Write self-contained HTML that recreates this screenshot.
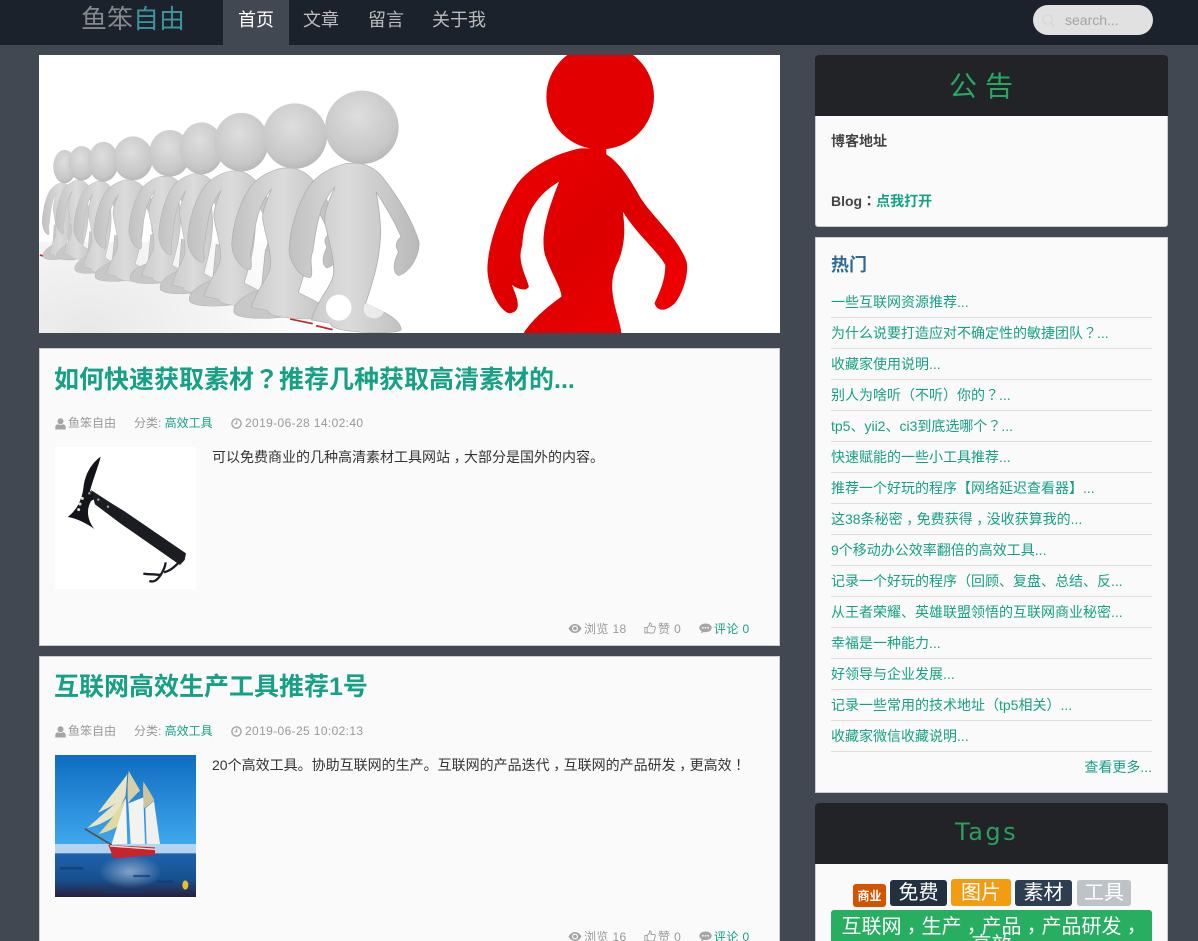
<!DOCTYPE html>
<html lang="zh-Hans">
<head>
<meta charset="utf-8">
<title>鱼笨自由</title>
<style>
html,body{margin:0;padding:0;width:1198px;height:941px;overflow:hidden;background:#414852}
#w{position:relative;width:1198px;height:941px;overflow:hidden;background:#414852;font-family:"Liberation Sans","Noto Sans CJK SC",sans-serif;color:#333}
i{font-style:normal;font-family:"Noto Sans CJK TC",sans-serif}
i.l{position:relative;top:.25em}
.a{position:absolute;white-space:nowrap}
.box{position:absolute;background:#fafafa;box-sizing:border-box}
.nav{top:0;height:45px;line-height:40px;font-size:18px;color:#bbb}
.title{left:54px;font-size:25px;font-weight:bold;color:#16a085;line-height:36px}
.meta{font-size:12px;line-height:18px;color:#999}
.meta b{font-weight:normal;color:#16a085}
.d{letter-spacing:.37px}
.txt{left:212px;font-size:14px;line-height:20px;color:#333}
.hot{left:831px;width:321px;height:31px;box-sizing:border-box;border-bottom:1px solid #ddd;font-size:14px;line-height:30px;color:#16a085;white-space:nowrap}
.dark{position:absolute;left:815px;width:353px;height:61px;background:#222326;border-radius:3px 3px 0 0;color:#27a862}
.tag{position:absolute;color:#fff;text-align:center;border-radius:3px;white-space:nowrap}
svg{position:absolute;overflow:hidden}
</style>
</head>
<body>
<div id="w">
<div class="a" style="left:0;top:0;width:1198px;height:45px;background:#1b222c"></div>
<div class="a" style="left:81px;top:0;font-size:26px;line-height:39px;color:#85898d">鱼笨<span style="color:#3c939e">自由</span></div>
<div class="a" style="left:223px;top:0;width:66px;height:45px;background:#414852"></div>
<div class="a nav" style="left:238px;color:#fff">首页</div>
<div class="a nav" style="left:303px">文章</div>
<div class="a nav" style="left:368px">留言</div>
<div class="a nav" style="left:432px">关于我</div>
<div class="a" style="left:1033px;top:5px;width:120px;height:30px;border-radius:15px;background:#e1e1e1"></div>
<svg style="left:1041px;top:13px" width="16" height="16" viewBox="0 0 16 16"><circle cx="6.5" cy="6.5" r="4.7" fill="none" stroke="#d6d6d6" stroke-width="1.2"/><path d="M10 10l3.5 3.5" stroke="#d6d6d6" stroke-width="1.4"/></svg>
<div class="a" style="left:1065px;top:10px;font-size:14px;line-height:20px;color:#a3a3a3">search...</div>

<!-- hero -->
<div class="a" style="left:39px;top:55px;width:741px;height:278px;background:#fff"></div>
<svg style="left:39px;top:55px" width="741" height="278" viewBox="-2 0 1570 834" preserveAspectRatio="none">
<defs>
<radialGradient id="hg" cx=".45" cy=".35" r=".75"><stop offset="0" stop-color="#dedede"/><stop offset=".7" stop-color="#c8c7c7"/><stop offset="1" stop-color="#aeadad"/></radialGradient>
<linearGradient id="bg" x1="0" x2="1" y1="0" y2="0"><stop offset="0" stop-color="#c2c1c1"/><stop offset=".45" stop-color="#dcdbdb"/><stop offset="1" stop-color="#b9b8b8"/></linearGradient>
<radialGradient id="fl" gradientUnits="userSpaceOnUse" cx="100" cy="834" r="520"><stop offset="0" stop-color="#e8e8e8"/><stop offset="1" stop-color="#fff"/></radialGradient>
<linearGradient id="rd" x1="0" x2="1" y1="0" y2="1"><stop offset="0" stop-color="#ef0000"/><stop offset=".5" stop-color="#dc0000"/><stop offset="1" stop-color="#f40000"/></linearGradient>
<g id="fig">
<path fill="url(#bg)" stroke="#b3b2b2" stroke-width="2" d="M650 325C620 335 590 355 570 395C545 450 530 520 528 585C530 625 550 665 572 668C582 655 568 620 578 590C585 520 590 450 625 395C612 440 598 480 605 510C612 560 625 610 622 660C615 700 590 730 575 795L615 805L620 815C640 834 750 840 765 825C765 790 720 765 690 745C705 680 720 620 722 530C720 470 715 430 712 410C735 460 755 510 765 545C750 565 755 580 760 590C750 620 745 650 760 662C785 650 805 600 803 560C785 480 750 410 725 365C710 340 695 332 680 325Z"/>
<ellipse cx="682" cy="217" rx="78" ry="110" fill="url(#hg)"/>
</g>
<g id="backleg">
<path fill="#c9c8c8" stroke="#b3b2b2" stroke-width="2" d="M610 600L660 620L650 740C680 770 675 815 660 825C620 835 550 835 535 815C525 785 560 750 600 735Z"/>
</g>
</defs>
<rect x="-2" y="560" width="1000" height="274" fill="url(#fl)"/>
<path d="M0 600L20 608M195 668L230 680M345 722L368 730M530 792L578 806M585 812L620 824" stroke="#c22a2a" stroke-width="5"/>
<g transform="translate(-159 236) scale(.31 .455)"><use href="#backleg"/><use href="#fig"/></g>
<g transform="translate(-157 223) scale(.36 .47)"><use href="#backleg"/><use href="#fig"/></g>
<g transform="translate(-145 202) scale(.41 .545)"><use href="#backleg"/><use href="#fig"/></g>
<g transform="translate(-171 180) scale(.54 .6)"><use href="#backleg"/><use href="#fig"/></g>
<g transform="translate(-110 157) scale(.565 .636)"><use href="#backleg"/><use href="#fig"/></g>
<g transform="translate(-60 126) scale(.59 .71)"><use href="#backleg"/><use href="#fig"/></g>
<g transform="translate(-78 88) scale(.74 .8)"><use href="#backleg"/><use href="#fig"/></g>
<g transform="translate(-53 50) scale(.87 .89)"><use href="#backleg"/><use href="#fig"/></g>
<use href="#fig"/>
<path fill="url(#rd)" d="M1145 280C1090 295 1030 340 1005 400C975 470 950 560 948 640C948 700 975 770 995 775C1020 770 1015 740 1000 690C1010 700 1030 712 1036 695C1030 660 1010 620 1022 570C1025 500 1040 430 1100 380C1075 470 1060 540 1070 600C1085 660 1105 700 1105 725C1070 760 1040 800 1025 834L1232 834C1228 780 1195 700 1225 620C1240 570 1240 520 1235 470C1260 530 1310 590 1325 630C1325 680 1310 720 1302 745C1310 775 1330 765 1345 745C1365 710 1375 650 1370 620C1350 540 1290 480 1265 410C1245 360 1225 320 1200 298L1200 280Z"/>
<ellipse cx="1187" cy="125" rx="114" ry="158" fill="#e20000"/>
<ellipse cx="633" cy="758" rx="27" ry="39" fill="#fff"/>
<ellipse cx="708" cy="762" rx="22" ry="28" fill="#fff" fill-opacity=".6"/>
</svg>

<!-- card 1 -->
<div class="box" style="left:39px;top:348px;width:741px;height:298px;border:1px solid #ccc"></div>
<div class="a title" style="top:360px">如何快速获取素材<i lang="zh-Hant">？</i>推荐几种获取高清素材的...</div>
<svg style="left:55px;top:418px" width="11" height="12" viewBox="0 0 11 12"><circle cx="5.5" cy="3.3" r="3" fill="#a5a5a5"/><path d="M.3 11.5V9C.5 7 2 6.2 3 6.2c1.4.9 3.6.9 5 0 1 0 2.5.8 2.7 2.8v2.5z" fill="#a5a5a5"/></svg>
<div class="a meta" style="left:68px;top:414px">鱼笨自由</div>
<div class="a meta" style="left:134px;top:414px">分类: <b>高效工具</b></div>
<svg style="left:231px;top:418px" width="11" height="11" viewBox="0 0 11 11"><circle cx="5.5" cy="5.5" r="4.6" fill="none" stroke="#a5a5a5" stroke-width="1.4"/><path d="M5.7 2.6v3.2H3.6" fill="none" stroke="#a5a5a5" stroke-width="1.2"/></svg>
<div class="a meta d" style="left:245px;top:414px">2019-06-28 14:02:40</div>
<div class="a" style="left:55px;top:447px;width:141px;height:142px;background:#fff"></div>
<svg style="left:30px;top:345px" width="400" height="300" viewBox="0 0 1200 900">
<path fill="#14151a" d="M212 335C185 355 165 385 160 430C155 470 135 500 113 516C140 520 170 535 193 552C172 525 168 495 183 468L205 455L180 438C190 400 205 365 212 335Z"/>
<path fill="#1c1d22" d="M183 435L240 472L285 500L468 625L464 645L450 660L275 538L240 512L195 478Z"/>
<path d="M444 655C430 668 420 678 402 682M407 652C405 670 398 680 392 690C380 708 370 712 358 708M392 690C375 688 355 688 340 686" fill="none" stroke="#1c1d22" stroke-width="7"/>
<circle cx="157" cy="460" r="4.5" fill="#ddd"/><circle cx="150" cy="477" r="4.5" fill="#ddd"/><circle cx="146" cy="494" r="4.5" fill="#ddd"/><circle cx="178" cy="445" r="3.5" fill="#aaa"/><circle cx="205" cy="464" r="3.5" fill="#aaa"/><circle cx="234" cy="485" r="3.5" fill="#aaa"/>
</svg>
<div class="a txt" style="top:447px">可以免费商业的几种高清素材工具网站<i lang="zh-Hant" class="l">，</i>大部分是国外的内容。</div>
<svg style="left:568px;top:623px" width="14" height="11" viewBox="0 0 14 11"><path d="M.5 5.5C2.5 2.2 4.8 1 7 1s4.5 1.2 6.5 4.5C11.5 8.8 9.2 10 7 10S2.500 8.800.5 5.500z" fill="#a5a5a5"/><circle cx="7" cy="5.500" r="3" fill="#fafafa"/><circle cx="7" cy="5.500" r="1.800" fill="#a5a5a5"/></svg>
<div class="a meta d" style="left:584px;top:620px">浏览 18</div>
<svg style="left:644px;top:622px" width="12" height="12" viewBox="0 0 12 12"><path d="M.8 5.500h2.400v5.500H.8zM3.200 5.500L5.500 3V1c1.300-.3 2 .8 1.800 2L7 4.500h3.500c1 .2 1 1.300.7 2L10 10.500c-.2.400-.5.500-1 .5H5.500L3.200 10z" fill="none" stroke="#a5a5a5"/></svg>
<div class="a meta d" style="left:658px;top:620px">赞 0</div>
<svg style="left:699px;top:623px" width="13" height="11" viewBox="0 0 13 11"><path d="M6.500.5C3 .5.300 2.400.300 4.800c0 1.400.9 2.600 2.300 3.400L2 10.500l2.700-1.500c.6.100 1.200.2 1.800.2 3.500 0 6.200-2 6.200-4.400S10 .5 6.500.5z" fill="#a5a5a5"/><circle cx="3.800" cy="4.800" r=".9" fill="#fafafa"/><circle cx="6.500" cy="4.800" r=".9" fill="#fafafa"/><circle cx="9.200" cy="4.800" r=".9" fill="#fafafa"/></svg>
<div class="a meta d" style="left:714px;top:620px;color:#16a085">评论 0</div>

<!-- card 2 -->
<div class="box" style="left:39px;top:656px;width:741px;height:300px;border:1px solid #ccc"></div>
<div class="a title" style="top:669px">互联网高效生产工具推荐1号</div>
<svg style="left:55px;top:726px" width="11" height="12" viewBox="0 0 11 12"><circle cx="5.5" cy="3.3" r="3" fill="#a5a5a5"/><path d="M.3 11.5V9C.5 7 2 6.2 3 6.2c1.4.9 3.6.9 5 0 1 0 2.500.8 2.700 2.800v2.500z" fill="#a5a5a5"/></svg>
<div class="a meta" style="left:68px;top:722px">鱼笨自由</div>
<div class="a meta" style="left:134px;top:722px">分类: <b>高效工具</b></div>
<svg style="left:231px;top:726px" width="11" height="11" viewBox="0 0 11 11"><circle cx="5.5" cy="5.5" r="4.6" fill="none" stroke="#a5a5a5" stroke-width="1.4"/><path d="M5.7 2.6v3.2H3.6" fill="none" stroke="#a5a5a5" stroke-width="1.2"/></svg>
<div class="a meta d" style="left:245px;top:722px">2019-06-25 10:02:13</div>
<svg style="left:55px;top:755px" width="141" height="142" viewBox="45 45 423 426">
<defs><linearGradient id="sky" x1="0" x2="0" y1="0" y2="1"><stop offset="0" stop-color="#0f6cc0"/><stop offset="1" stop-color="#3fa8ee"/></linearGradient>
<linearGradient id="sea" x1="0" x2="0" y1="0" y2="1"><stop offset="0" stop-color="#1d63ae"/><stop offset=".6" stop-color="#17508f"/><stop offset="1" stop-color="#2a1f3c"/></linearGradient>
<radialGradient id="rf"><stop offset="0" stop-color="#a9bbd6" stop-opacity=".75"/><stop offset="1" stop-color="#a9bbd6" stop-opacity="0"/></radialGradient></defs>
<rect x="45" y="45" width="423" height="270" fill="url(#sky)"/>
<rect x="45" y="312" width="423" height="30" fill="#b7d4ee"/>
<rect x="45" y="340" width="423" height="131" fill="url(#sea)"/>
<ellipse cx="270" cy="395" rx="95" ry="50" fill="url(#rf)"/>
<path d="M60 385h70M280 408h50M70 445h60M190 455h120M350 425h50" stroke="#123a6e" stroke-width="7" opacity=".7"/>
<path d="M262 102C240 135 205 175 174 218C205 205 240 185 257 165Z" fill="#e8e4c8"/>
<path d="M258 165C225 190 180 230 142 264C180 255 210 240 232 218Z" fill="#e8e4c8"/>
<path d="M258 172C235 210 205 250 176 282C205 275 235 262 240 250Z" fill="#e0d9a0"/>
<path d="M258 175C240 230 225 280 215 312H262Z" fill="#f4f4f0"/>
<path d="M266 92C262 130 262 160 264 190C280 170 292 160 300 152C288 130 275 110 266 92Z" fill="#d8cfa8"/>
<path d="M310 172L265 190L272 312H315Z" fill="#f2f2f0"/>
<path d="M310 125C308 155 310 185 312 205C328 195 338 185 343 180C332 160 320 140 310 125Z" fill="#cfc39e"/>
<path d="M342 183L316 205L320 312H360Z" fill="#f0f0ee"/>
<path d="M134 266L215 315" stroke="#5a5040" stroke-width="5"/>
<path d="M205 315L345 322L345 345L220 355C215 340 210 328 205 315Z" fill="#c8242c"/>
<path d="M210 318L345 328" stroke="#f2e9e0" stroke-width="4"/>
<ellipse cx="436" cy="435" rx="9" ry="14" fill="#e3c12a"/>
</svg>
<div class="a txt" style="top:755px">20个高效工具。协助互联网的生产。互联网的产品迭代<i lang="zh-Hant" class="l">，</i>互联网的产品研发<i lang="zh-Hant" class="l">，</i>更高效<i lang="zh-Hant">！</i></div>
<svg style="left:568px;top:931px" width="14" height="11" viewBox="0 0 14 11"><path d="M.5 5.500C2.500 2.200 4.800 1 7 1s4.500 1.200 6.500 4.500C11.500 8.800 9.200 10 7 10S2.500 8.800.5 5.500z" fill="#a5a5a5"/><circle cx="7" cy="5.500" r="3" fill="#fafafa"/><circle cx="7" cy="5.500" r="1.800" fill="#a5a5a5"/></svg>
<div class="a meta d" style="left:584px;top:928px">浏览 16</div>
<svg style="left:644px;top:930px" width="12" height="12" viewBox="0 0 12 12"><path d="M.8 5.500h2.400v5.500H.8zM3.200 5.500L5.500 3V1c1.300-.3 2 .8 1.800 2L7 4.500h3.500c1 .2 1 1.300.7 2L10 10.500c-.2.400-.5.500-1 .5H5.500L3.200 10z" fill="none" stroke="#a5a5a5"/></svg>
<div class="a meta d" style="left:658px;top:928px">赞 0</div>
<svg style="left:699px;top:931px" width="13" height="11" viewBox="0 0 13 11"><path d="M6.500.5C3 .5.300 2.400.300 4.800c0 1.400.9 2.600 2.300 3.400L2 10.500l2.700-1.500c.6.100 1.200.2 1.800.2 3.500 0 6.200-2 6.200-4.400S10 .5 6.500.5z" fill="#a5a5a5"/><circle cx="3.800" cy="4.800" r=".9" fill="#fafafa"/><circle cx="6.500" cy="4.800" r=".9" fill="#fafafa"/><circle cx="9.200" cy="4.800" r=".9" fill="#fafafa"/></svg>
<div class="a meta d" style="left:714px;top:928px;color:#16a085">评论 0</div>

<!-- notice -->
<div class="box" style="left:815px;top:55px;width:353px;height:172px;border:1px solid #ccc;border-radius:3px"></div>
<div class="dark" style="top:55px"></div>
<div class="a" style="left:949px;top:66px;font-size:28px;line-height:42px;letter-spacing:8px;color:#27a862">公告</div>
<div class="a" style="left:831px;top:131px;font-size:14px;line-height:20px;font-weight:bold;color:#444">博客地址</div>
<div class="a" style="left:831px;top:191px;font-size:14px;line-height:20px;font-weight:bold;color:#444">Blog<i lang="zh-Hant">：</i><span style="color:#16a085">点我打开</span></div>

<!-- hot -->
<div class="box" style="left:815px;top:237px;width:353px;height:556px;border:1px solid #ccc"></div>
<div class="a" style="left:831px;top:251px;font-size:18px;line-height:28px;font-weight:bold;color:#2e6a94">热门</div>
<div class="a hot" style="top:287px">一些互联网资源推荐...</div>
<div class="a hot" style="top:318px">为什么说要打造应对不确定性的敏捷团队<i lang="zh-Hant">？</i>...</div>
<div class="a hot" style="top:349px">收藏家使用说明...</div>
<div class="a hot" style="top:380px">别人为啥听<i lang="zh-Hant">（</i>不听<i lang="zh-Hant">）</i>你的<i lang="zh-Hant">？</i>...</div>
<div class="a hot" style="top:411px">tp5、yii2、ci3到底选哪个<i lang="zh-Hant">？</i>...</div>
<div class="a hot" style="top:442px">快速赋能的一些小工具推荐...</div>
<div class="a hot" style="top:473px">推荐一个好玩的程序【网络延迟查看器】...</div>
<div class="a hot" style="top:504px">这38条秘密<i lang="zh-Hant" class="l">，</i>免费获得<i lang="zh-Hant" class="l">，</i>没收获算我的...</div>
<div class="a hot" style="top:535px">9个移动办公效率翻倍的高效工具...</div>
<div class="a hot" style="top:566px">记录一个好玩的程序<i lang="zh-Hant">（</i>回顾、复盘、总结、反...</div>
<div class="a hot" style="top:597px">从王者荣耀、英雄联盟领悟的互联网商业秘密...</div>
<div class="a hot" style="top:628px">幸福是一种能力...</div>
<div class="a hot" style="top:659px">好领导与企业发展...</div>
<div class="a hot" style="top:690px">记录一些常用的技术地址<i lang="zh-Hant">（</i>tp5相关<i lang="zh-Hant">）</i>...</div>
<div class="a hot" style="top:721px">收藏家微信收藏说明...</div>
<div class="a" style="right:46px;top:757px;font-size:14px;line-height:20px;color:#16a085">查看更多...</div>

<!-- tags -->
<div class="box" style="left:815px;top:803px;width:353px;height:160px;border:1px solid #ccc;border-radius:3px"></div>
<div class="dark" style="top:803px"></div>
<div class="a" style="left:955px;top:817px;font-family:'DejaVu Sans',sans-serif;font-size:24px;line-height:30px;letter-spacing:2.5px;color:#2a9e60">Tags</div>
<div class="tag" style="left:853px;top:884px;width:33px;height:23px;background:#d35400;font-size:12px;font-weight:bold;line-height:24px">商业</div>
<div class="tag" style="left:890px;top:880px;width:57px;height:26px;background:#22303f;font-size:20px;line-height:27px">免费</div>
<div class="tag" style="left:951px;top:879px;width:60px;height:27px;background:#f39c12;font-size:20px;line-height:28px">图片</div>
<div class="tag" style="left:1015px;top:880px;width:57px;height:26px;background:#2c3e50;font-size:20px;line-height:27px">素材</div>
<div class="tag" style="left:1077px;top:880px;width:54px;height:26px;background:#bdc3c7;font-size:20px;line-height:27px">工具</div>
<div class="tag" style="left:831px;top:910px;width:321px;height:60px;padding-top:6px;background:#27ae60;font-size:20px;line-height:18px">互联网<i lang="zh-Hant" class="l">，</i>生产<i lang="zh-Hant" class="l">，</i>产品<i lang="zh-Hant" class="l">，</i>产品研发<i lang="zh-Hant" class="l">，</i><br>高效</div>
</div>
</body>
</html>
